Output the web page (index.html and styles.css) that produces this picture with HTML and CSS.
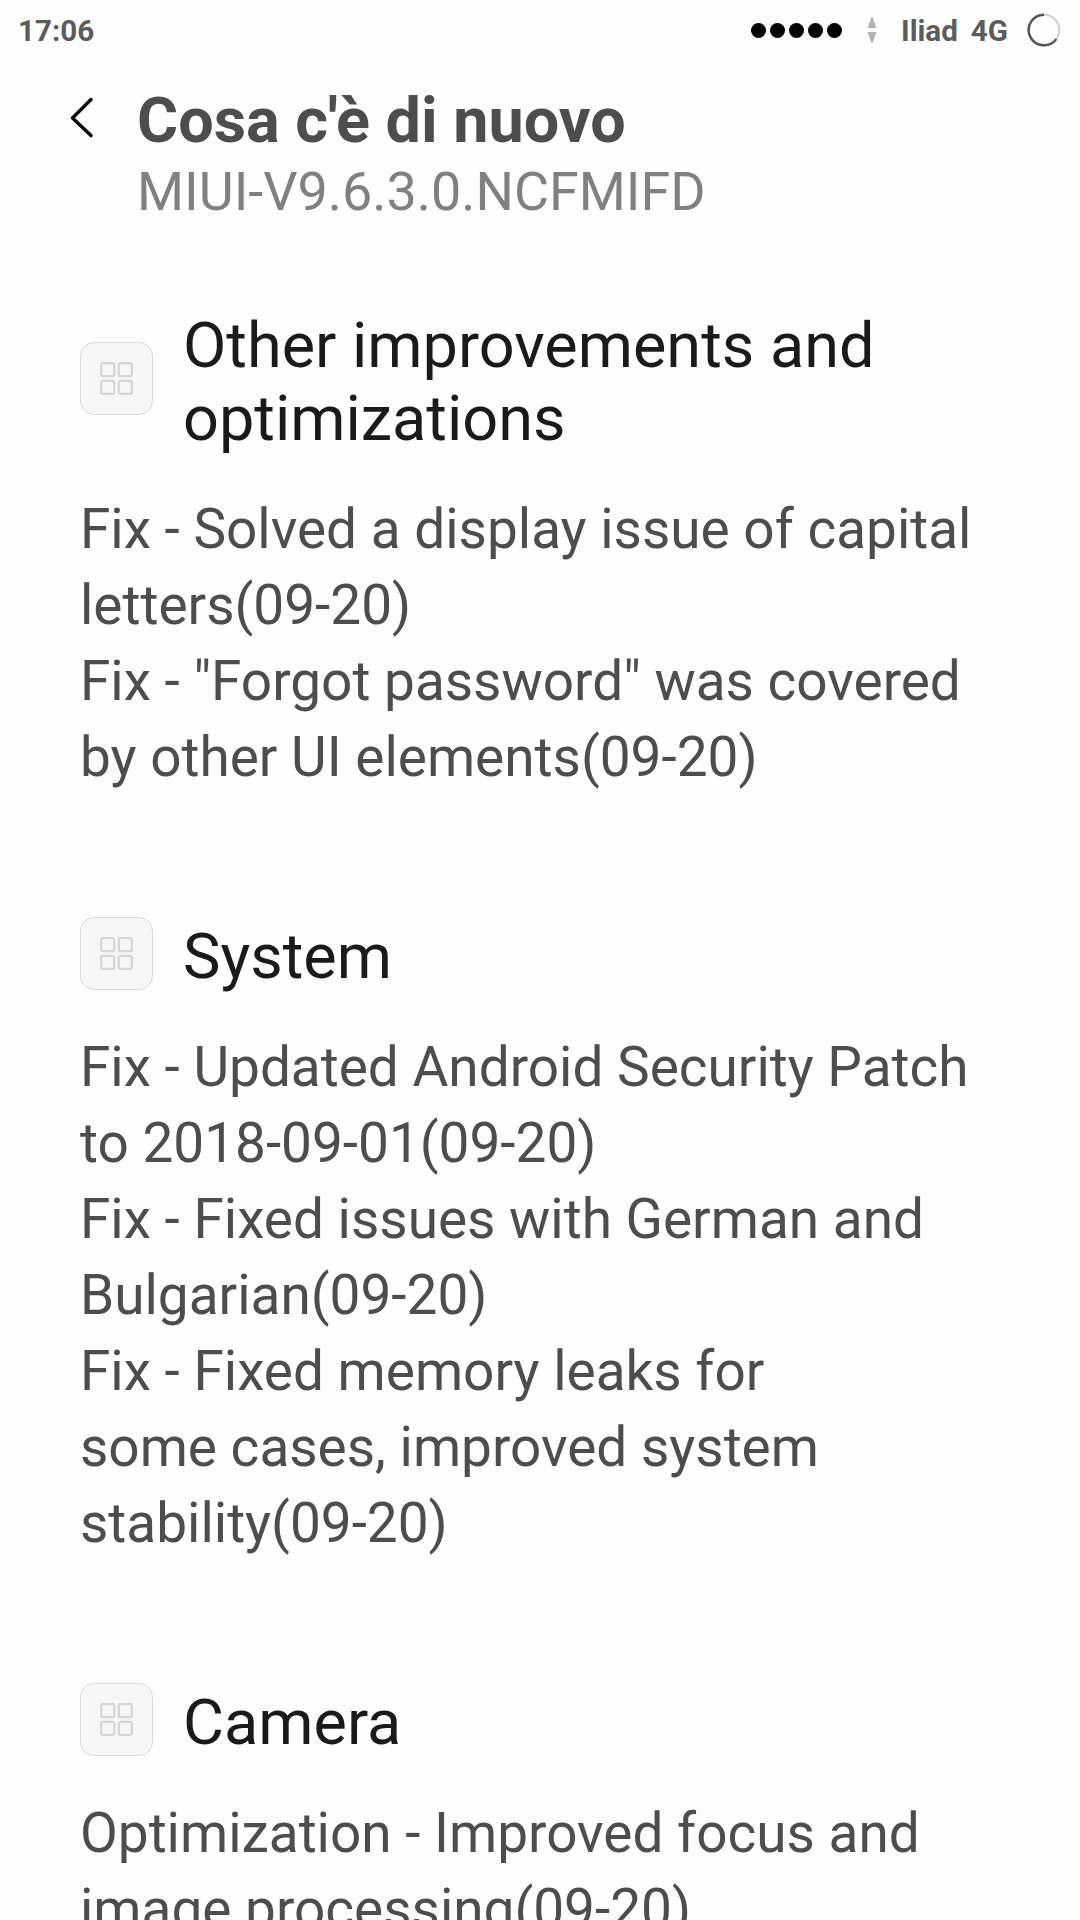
FILE: index.html
```
<!DOCTYPE html>
<html lang="it">
<head>
    <meta charset="UTF-8">
    <meta name="viewport" content="width=device-width, initial-scale=1.0">
    <title>Cosa c'è di nuovo</title>
    <link rel="stylesheet" href="styles.css">
</head>
<body>
    <svg class="symbols" width="0" height="0">
        <symbol id="grid" viewBox="0 0 33 33">
            <rect x="1.2" y="1.2" width="13" height="13" rx="1.5"/>
            <rect x="18.8" y="1.2" width="13" height="13" rx="1.5"/>
            <rect x="1.2" y="18.8" width="13" height="13" rx="1.5"/>
            <rect x="18.8" y="18.8" width="13" height="13" rx="1.5"/>
        </symbol>
    </svg>

    <div class="status-bar">
        <span class="time">17:06</span>
        <div class="status-right">
            <div class="signal"><i></i><i></i><i></i><i></i><i></i></div>
            <svg class="data" width="10" height="28" viewBox="0 0 10 28">
                <path d="M5 0L9.5 12H0.5ZM0.5 16H9.5L5 28Z" fill="#b0b0b0"/>
            </svg>
            <span class="carrier">Iliad</span>
            <span class="network">4G</span>
            <svg class="battery" width="34" height="34" viewBox="0 0 34 34">
                <circle cx="17" cy="17" r="15.3" fill="none" stroke="#cfcfcf" stroke-width="2"/>
                <path d="M17 1.7A15.3 15.3 0 1 0 29.3 26.1" fill="none" stroke="#555" stroke-width="2.4"/>
            </svg>
        </div>
    </div>

    <header class="header">
        <svg class="back" width="24" height="42" viewBox="0 0 24 42">
            <path d="M21 2.5L2.5 21L21 38.5" fill="none" stroke="#000" stroke-width="3.4" stroke-linecap="round" stroke-linejoin="round"/>
        </svg>
        <div class="titles">
            <h1>Cosa c'è di nuovo</h1>
            <p class="version">MIUI-V9.6.3.0.NCFMIFD</p>
        </div>
    </header>

    <main class="changelog">
        <section class="group">
            <div class="group-head">
                <div class="icon"><svg width="33" height="33"><use href="#grid"/></svg></div>
                <h2>Other improvements and<br>optimizations</h2>
            </div>
            <p>Fix - Solved a display issue of capital<br>letters(09-20)</p>
            <p>Fix - "Forgot password" was covered<br>by other UI elements(09-20)</p>
        </section>

        <section class="group">
            <div class="group-head">
                <div class="icon"><svg width="33" height="33"><use href="#grid"/></svg></div>
                <h2>System</h2>
            </div>
            <p>Fix - Updated Android Security Patch<br>to 2018-09-01(09-20)</p>
            <p>Fix - Fixed issues with German and<br>Bulgarian(09-20)</p>
            <p>Fix - Fixed memory leaks for<br>some cases, improved system<br>stability(09-20)</p>
        </section>

        <section class="group">
            <div class="group-head">
                <div class="icon"><svg width="33" height="33"><use href="#grid"/></svg></div>
                <h2>Camera</h2>
            </div>
            <p>Optimization - Improved focus and<br>image processing(09-20)</p>
        </section>
    </main>
</body>
</html>
```
FILE: styles.css
```
* {
    box-sizing: border-box;
}
body {
    margin: 0;
    height: 1920px;
    overflow: hidden;
    background-color: #fefefe;
    font-family: Roboto, sans-serif;
    white-space: nowrap;
}
h1, h2, p {
    margin: 0;
}
svg {
    display: block;
    flex: none;
}
.symbols {
    position: absolute;
}

/* status bar */
.status-bar {
    display: flex;
    justify-content: space-between;
    height: 60px;
    padding: 0 19px 0 18px;
    font-size: 29.6px;
    font-weight: 700;
    line-height: 63px;
    color: #5c5c5c;
}
.status-right {
    display: flex;
}
.signal {
    display: flex;
    gap: 4px;
    margin: 23px 25px 0 0;
}
.signal i {
    width: 15px;
    height: 15px;
    border-radius: 50%;
    background-color: #000;
}
.data {
    margin: 16px 24px 0 0;
}
.carrier {
    margin-right: 13px;
}
.network {
    margin-right: 19px;
}
.battery {
    margin-top: 13px;
}

/* header */
.header {
    display: flex;
    height: 249px;
    padding: 24px 0 0 70px;
}
.back {
    margin: 13px 43px 0 0;
}
h1 {
    font-size: 62.9px;
    font-weight: 700;
    line-height: 74px;
    color: #4d4d4d;
}
.version {
    font-size: 53.9px;
    line-height: 68px;
    color: #808080;
}

/* changelog */
.changelog {
    padding: 0 80px;
}
.group {
    margin-bottom: 125px;
}
.group-head {
    display: flex;
    align-items: center;
    margin-bottom: 36px;
}
.icon {
    display: flex;
    flex: none;
    align-items: center;
    justify-content: center;
    width: 73px;
    height: 73px;
    margin: -4px 30px 3px 0;
    border: 1px solid #dadada;
    border-radius: 14px;
    background-color: #f7f7f7;
}
/* shapes inherit these through <use> */
.symbols rect {
    fill: none;
    stroke: #d6d6d6;
    stroke-width: 2.3;
}
h2 {
    font-size: 63px;
    font-weight: 400;
    line-height: 73px;
    color: #1a1a1a;
}
.group p {
    font-size: 54.95px;
    line-height: 76px;
    color: #4d4d4d;
}
```
